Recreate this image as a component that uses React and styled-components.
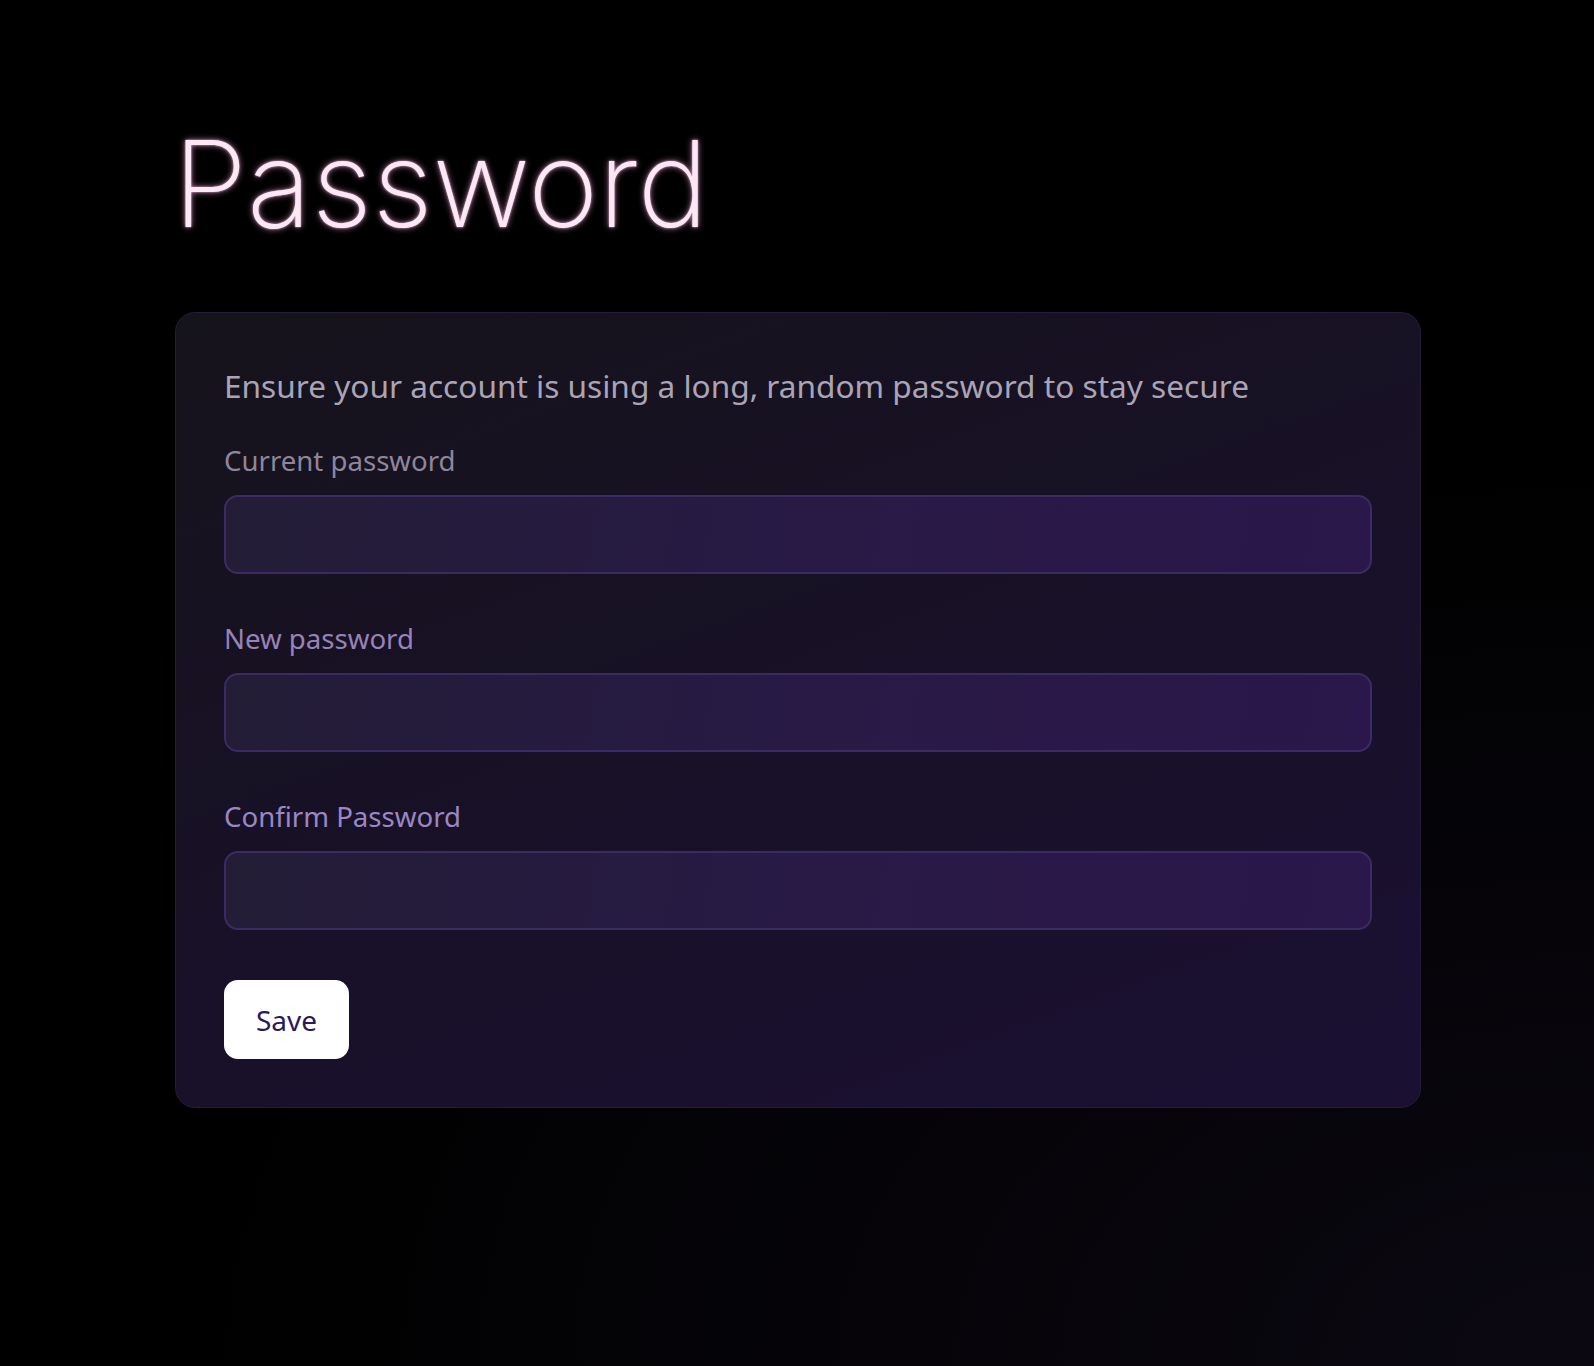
import React from 'react'
import styled, { createGlobalStyle } from 'styled-components'

const GlobalStyle = createGlobalStyle`
  html, body {
    margin: 0;
    padding: 0;
    background: #000;
  }
  body {
    font-family: "Noto Sans", "Open Sans", sans-serif;
  }
`;

function App() {
  const fields = [
    { id: 'current', label: 'Current password', tone: '#8d869c' },
    { id: 'new', label: 'New password', tone: '#9783b6' },
    { id: 'confirm', label: 'Confirm Password', tone: '#9a87c4' },
  ];

  return (
    <>
      <GlobalStyle />
      <Page>
        <Title>Password</Title>
        <Card>
          <Description>Ensure your account is using a long, random password to stay secure</Description>
          <Fields>
            {fields.map((f) => (
              <Field key={f.id}>
                <Label htmlFor={f.id} $tone={f.tone}>{f.label}</Label>
                <Input id={f.id} type="password" />
              </Field>
            ))}
          </Fields>
          <SaveButton>Save</SaveButton>
        </Card>
      </Page>
    </>
  )
}

export default App

const Page = styled.div`
  min-height: 1366px;
  box-sizing: border-box;
  padding: 109px 0 0 175px;
  background:
    radial-gradient(ellipse 1400px 900px at 100% 100%, #0b0812 0%, #060409 50%, #000 100%);
`;

const Title = styled.h1`
  margin: 0 0 53px -2px;
  font-family: Inter, "Noto Sans", sans-serif;
  font-weight: 200;
  font-size: 120px;
  line-height: 150px;
  color: #fbe8f4;
  text-shadow: 0 0 6px rgba(232, 160, 210, 0.75), 0 0 2px rgba(255, 210, 240, 0.9);
`;

const Card = styled.section`
  box-sizing: border-box;
  width: 1246px;
  padding: 48px;
  border: 1px solid #241c38;
  border-radius: 20px;
  background: linear-gradient(160deg, #15131b 0%, #181126 45%, #1b1033 100%);
  display: flex;
  flex-direction: column;
  align-items: flex-start;
`;

const Description = styled.p`
  margin: 0 0 31px;
  font-size: 31.6px;
  line-height: 50px;
  color: #aaa4b6;
`;

const Fields = styled.div`
  align-self: stretch;
  display: flex;
  flex-direction: column;
  gap: 46px;
  margin-bottom: 50px;
`;

const Field = styled.div`
  display: flex;
  flex-direction: column;
`;

const Label = styled.label`
  font-size: 27.6px;
  line-height: 36px;
  margin-bottom: 17px;
  color: ${(p) => p.$tone};
`;

const Input = styled.input`
  box-sizing: border-box;
  height: 79px;
  width: 100%;
  border: 2px solid #3b2b62;
  border-radius: 14px;
  background: linear-gradient(100deg, #231d36 0%, #281a45 50%, #2b174b 100%);
  outline: none;
  color: #ddd;
  font-size: 26px;
  padding: 0 20px;
`;

const SaveButton = styled.button`
  height: 79px;
  padding: 0 32px;
  border: none;
  border-radius: 14px;
  background: #fff;
  color: #2a1a5c;
  font-family: "Noto Sans", sans-serif;
  font-size: 28px;
  cursor: pointer;
`;
